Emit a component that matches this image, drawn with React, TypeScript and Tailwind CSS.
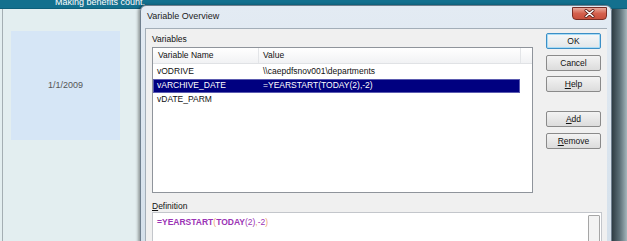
import React from "react";

function Btn({ children, def = false }: { children: React.ReactNode; def?: boolean }) {
  return (
    <div
      className={
        "w-[55px] h-[16px] rounded-[2px] border flex items-center justify-center text-[8.5px] leading-[10px] text-[#111] bg-gradient-to-b " +
        (def
          ? "border-[#3c8fc6] shadow-[inset_0_0_0_1px_#a8dcf6] from-[#f6f8f9] to-[#e2e6e9]"
          : "border-[#8a8a8a] from-[#f3f3f3] to-[#dcdcdc]")
      }
    >
      {children}
    </div>
  );
}

export default function App() {
  return (
    <div className="relative w-[627px] h-[241px] overflow-hidden bg-[#e3eef0] font-['Liberation_Sans',Arial,sans-serif]">
      {/* background application */}
      <div className="flex flex-col h-full">
        <div className="h-[9px] bg-[#13708e] overflow-hidden border-b border-[#0d5f7a]">
          <div className="pl-[55px] -mt-[3px] text-[9px] leading-[10px] text-white">Making benefits count.</div>
        </div>
        <div className="flex flex-1">
          <div className="w-[140px] ml-[2px] border-l border-[#a4aeb3] pl-[8px] pt-[22px]">
            <div className="w-[109px] h-[109px] bg-[#d6e6f6] flex items-center justify-center text-[9px] text-[#555]">
              1/1/2009
            </div>
          </div>
          <div className="flex-1" />
          <div className="w-[15px] bg-gradient-to-r from-[#2f3d44] via-[#5b6e76] to-[#a5b6bc]" />
        </div>
      </div>

      {/* dialog window */}
      <div className="absolute left-[140px] top-[5px] w-[472px] h-[260px] rounded-t-[6px] border border-[#6f7f8e] bg-gradient-to-b from-[#e3ebf3] to-[#d3dfea] shadow-[-2px_0_3px_rgba(0,0,0,0.35)] flex flex-col">
        <div className="relative h-[22px] pl-[6px] flex items-center text-[9px] text-[#1b1b1b]">
          Variable Overview
          <div className="absolute right-[4px] top-[1px] w-[35px] h-[13px] rounded-b-[4px] border border-[#7a2d24] bg-gradient-to-b from-[#e9a99b] via-[#d4604d] to-[#c9503c] flex items-center justify-center">
            <svg width="11" height="9" viewBox="0 0 11 9">
              <path d="M2 1.5 L9 7.5 M9 1.5 L2 7.5" stroke="#5a1e18" strokeWidth="3" strokeLinecap="round" />
              <path d="M2 1.5 L9 7.5 M9 1.5 L2 7.5" stroke="#ffffff" strokeWidth="1.6" strokeLinecap="round" />
            </svg>
          </div>
        </div>
        <div className="mx-[4px] flex-1 bg-[#f0f0f0] border-l border-t border-[#a3aeb8] flex flex-col text-[8.5px] text-[#111]">
          <div className="flex">
            <div className="pl-[6px] pt-[4px]">
              <div className="leading-[12px] h-[12px]">Variables</div>
              <div className="mt-[2px] w-[381px] h-[146px] bg-white border border-[#8f949b]">
                <div className="flex h-[16px] bg-gradient-to-b from-[#ffffff] to-[#f1f2f4] border-b border-[#e0e2e5]">
                  <div className="w-[106px] border-r border-[#e3e5e8] pl-[5px] flex items-center">Variable Name</div>
                  <div className="w-[262px] border-r border-[#e3e5e8] pl-[4px] flex items-center">Value</div>
                  <div className="flex-1" />
                </div>
                <div className="flex flex-col pt-[1px]">
                  <div className="flex h-[14px] items-center pb-[2px]">
                    <div className="w-[106px] pl-[4px]">vODRIVE</div>
                    <div className="w-[261px] pl-[4px]">\\caepdfsnov001\departments</div>
                  </div>
                  <div className="flex h-[14px] items-center pb-[1px] w-[367px] bg-[#000080] text-white border border-[#5b5bb0]">
                    <div className="w-[105px] pl-[3px]">vARCHIVE_DATE</div>
                    <div className="w-[260px] pl-[4px]">=YEARSTART(TODAY(2),-2)</div>
                  </div>
                  <div className="flex h-[14px] items-center pb-[2px]">
                    <div className="w-[106px] pl-[4px]">vDATE_PARM</div>
                    <div className="w-[261px] pl-[4px]" />
                  </div>
                </div>
              </div>
            </div>
            <div className="ml-[13px] pt-[4px] flex flex-col">
              <Btn def>OK</Btn>
              <div className="mt-[6px]"><Btn>Cancel</Btn></div>
              <div className="mt-[5px]"><Btn><span className="underline">H</span>elp</Btn></div>
              <div className="mt-[19px]"><Btn><span className="underline">A</span>dd</Btn></div>
              <div className="mt-[6px]"><Btn><span className="underline">R</span>emove</Btn></div>
            </div>
          </div>
          <div className="pl-[6px] mt-[7px]">
            <div className="leading-[12px] h-[12px]"><span className="underline">D</span>efinition</div>
            <div className="relative w-[450px] h-[40px] bg-white border border-[#c3c6cb] pl-[4px] pt-[3px]">
              <div className="text-[8.5px] leading-[12px]">
                <span className="text-[#9b33b5] font-bold">=YEARSTART</span>
                <span className="text-[#f0a070]">(</span>
                <span className="text-[#9b33b5] font-bold">TODAY</span>
                <span className="text-[#9b33b5]">(2)</span>
                <span className="text-[#f0a070]">,</span>
                <span className="text-[#9b33b5]">-2</span>
                <span className="text-[#f0a070]">)</span>
              </div>
              <div className="absolute right-[1px] top-[2px] w-[12px] h-[40px] bg-[#f3f3f3] border border-[#a6a6a6] rounded-[1px]" />
            </div>
          </div>
        </div>
      </div>
    </div>
  );
}
